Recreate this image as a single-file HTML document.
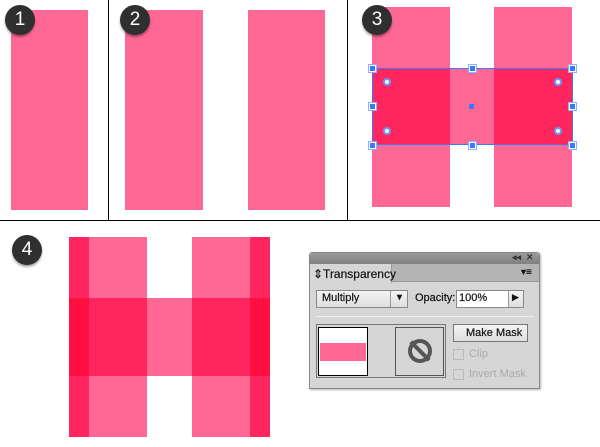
<!DOCTYPE html><html><head><style>
*{margin:0;padding:0;box-sizing:border-box}
body{width:600px;height:447px;background:#fff;position:relative;overflow:hidden;font-family:"Liberation Sans",sans-serif}
.a{position:absolute}
.p{background:#ff6795}.d{background:#ff2660}.r{background:#ff1040}
.b{position:absolute;width:30px;height:30px;border-radius:50%;background:#2f2f2f;color:#fff;font-size:19px;text-align:center;line-height:30px;box-shadow:0 2px 2px rgba(0,0,0,.35)}
.h{position:absolute;width:7px;height:7px;background:#3c78ff;border:1px solid #fff;outline:1px solid #8fb0ff}
.c{position:absolute;width:8px;height:8px;border-radius:50%;background:#fff;border:2px solid #6a95ff}
.t{font-size:11px;color:#111;position:absolute;-webkit-text-stroke:0.2px #111}
</style></head><body>
<div class="a" style="left:108px;top:0;width:1px;height:221px;background:#000"></div>
<div class="a" style="left:347px;top:0;width:1px;height:221px;background:#000"></div>
<div class="a" style="left:0;top:220px;width:600px;height:1px;background:#000"></div>

<div class="a p" style="left:11px;top:10px;width:77px;height:200px"></div>
<div class="a p" style="left:125px;top:10px;width:78px;height:200px"></div>
<div class="a p" style="left:248px;top:10px;width:77px;height:200px"></div>

<div class="a p" style="left:372px;top:7px;width:78px;height:200px"></div>
<div class="a p" style="left:494px;top:7px;width:78px;height:200px"></div>
<div class="a p" style="left:450px;top:69px;width:44px;height:76px"></div>
<div class="a d" style="left:372px;top:69px;width:78px;height:76px"></div>
<div class="a d" style="left:494px;top:69px;width:79px;height:76px"></div>
<div class="a" style="left:373px;top:68px;width:200px;height:77px;border:1px solid #3c78ff"></div>
<div class="h" style="left:369px;top:65px"></div><div class="h" style="left:469px;top:65px"></div><div class="h" style="left:569px;top:65px"></div>
<div class="h" style="left:369px;top:103px"></div><div class="h" style="left:569px;top:103px"></div>
<div class="h" style="left:369px;top:142px"></div><div class="h" style="left:469px;top:142px"></div><div class="h" style="left:569px;top:142px"></div>
<div class="a" style="left:469px;top:104px;width:5px;height:5px;background:#3c78ff"></div>
<div class="c" style="left:383px;top:78px"></div><div class="c" style="left:554px;top:78px"></div>
<div class="c" style="left:383px;top:127px"></div><div class="c" style="left:554px;top:127px"></div>

<div class="a d" style="left:69px;top:237px;width:20px;height:200px"></div>
<div class="a p" style="left:89px;top:237px;width:58px;height:200px"></div>
<div class="a p" style="left:192px;top:237px;width:58px;height:200px"></div>
<div class="a d" style="left:250px;top:237px;width:20px;height:200px"></div>
<div class="a p" style="left:147px;top:298px;width:45px;height:78px"></div>
<div class="a d" style="left:89px;top:298px;width:58px;height:78px"></div>
<div class="a d" style="left:192px;top:298px;width:58px;height:78px"></div>
<div class="a r" style="left:69px;top:298px;width:20px;height:78px"></div>
<div class="a r" style="left:250px;top:298px;width:20px;height:78px"></div>

<div class="b" style="left:5px;top:5px">1</div>
<div class="b" style="left:120px;top:5px">2</div>
<div class="b" style="left:362px;top:5px">3</div>
<div class="b" style="left:12px;top:235px">4</div>

<div class="a" style="left:309px;top:252px;width:231px;height:137px;background:#d6d6d6;border:1px solid #888;border-radius:3px 3px 0 0;box-shadow:1px 1px 2px rgba(0,0,0,.3)"></div>
<div class="a" style="left:310px;top:253px;width:229px;height:11px;background:linear-gradient(#9a9a9a,#808080);border-radius:3px 3px 0 0"></div>
<div class="t" style="left:512px;top:252px;font-size:9px;color:#333">◂◂&nbsp;&nbsp;✕</div>
<div class="a" style="left:310px;top:264px;width:229px;height:18px;background:#b4b4b4;border-bottom:1px solid #999"></div>
<div class="a" style="left:310px;top:264px;width:82px;height:19px;background:#d6d6d6;border-right:1px solid #999"></div>
<div class="t" style="left:313px;top:267px;font-size:12px">⇕Transparency</div>
<div class="t" style="left:521px;top:267px;font-size:10px">▾≡</div>
<div class="a" style="left:316px;top:290px;width:92px;height:18px;background:linear-gradient(#f4f4f4,#dedede);border:1px solid #888"></div>
<div class="t" style="left:322px;top:292px">Multiply</div>
<div class="a" style="left:390px;top:291px;width:1px;height:16px;background:#999"></div>
<div class="t" style="left:395px;top:292px;font-size:9px">▼</div>
<div class="t" style="left:415px;top:292px">Opacity:</div>
<div class="a" style="left:456px;top:290px;width:68px;height:18px;background:#fff;border:1px solid #888"></div>
<div class="t" style="left:459px;top:292px">100%</div>
<div class="a" style="left:508px;top:291px;width:15px;height:16px;background:linear-gradient(#f4f4f4,#dedede);border-left:1px solid #999"></div>
<div class="t" style="left:512px;top:292px;font-size:9px">▶</div>
<div class="a" style="left:316px;top:316px;width:218px;height:1px;background:#aaa;border-bottom:1px solid #eee"></div>
<div class="a" style="left:316px;top:324px;width:130px;height:54px;border:1px solid #777"></div>
<div class="a" style="left:318px;top:327px;width:50px;height:49px;background:#fff;border:1px solid #000"></div>
<div class="a p" style="left:320px;top:343px;width:46px;height:18px"></div>
<div class="a" style="left:395px;top:327px;width:49px;height:49px;border:1px solid #555"></div>
<div class="a" style="left:408px;top:339px;width:24px;height:24px;border:4px solid #555;border-radius:50%"></div>
<div class="a" style="left:418px;top:338px;width:4px;height:26px;background:#555;transform:rotate(-45deg)"></div>
<div class="a" style="left:453px;top:324px;width:75px;height:18px;background:linear-gradient(#f4f4f4,#dedede);border:1px solid #777"></div>
<div class="t" style="left:466px;top:327px">Make Mask</div>
<div class="a" style="left:453px;top:349px;width:11px;height:11px;border:1px solid #bbb"></div>
<div class="t" style="left:469px;top:348px;color:#aaa;-webkit-text-stroke:0">Clip</div>
<div class="a" style="left:453px;top:369px;width:11px;height:11px;border:1px solid #bbb"></div>
<div class="t" style="left:469px;top:368px;color:#aaa;-webkit-text-stroke:0">Invert Mask</div>
</body></html>
